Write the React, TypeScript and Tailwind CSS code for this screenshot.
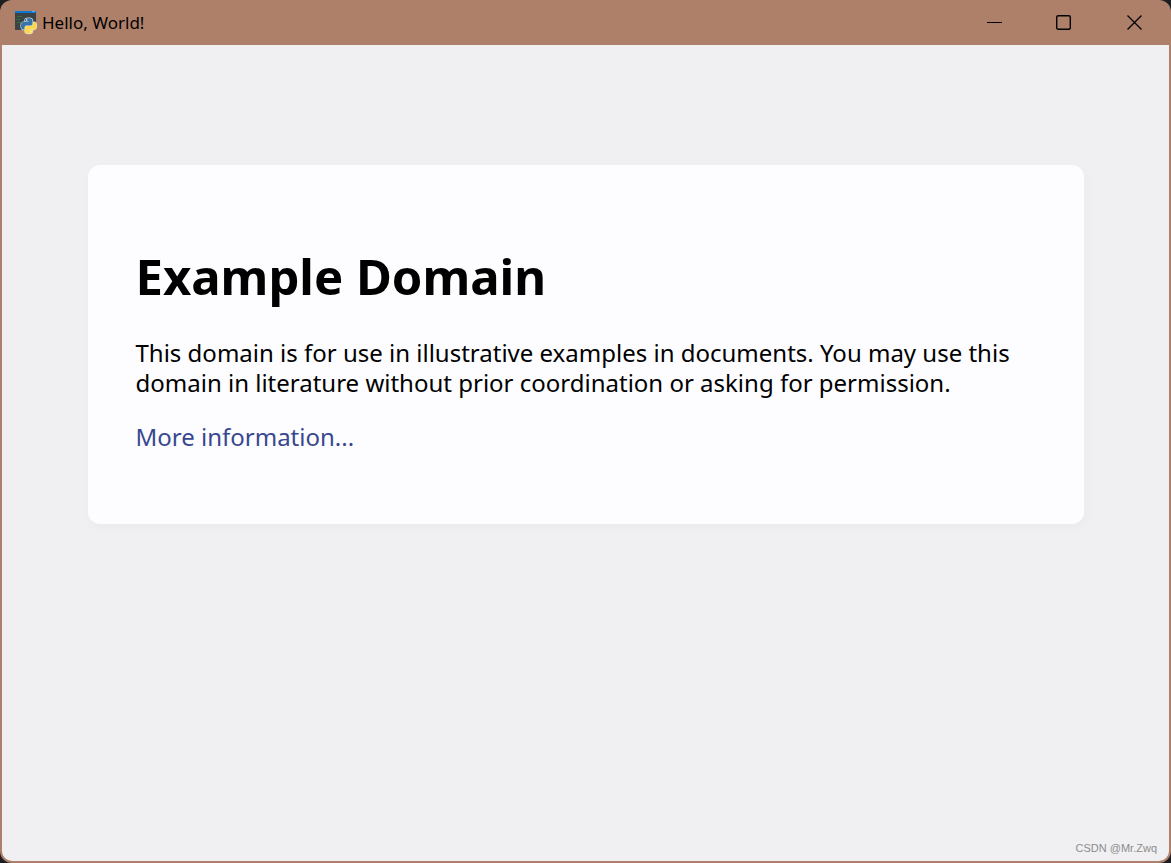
import { useState } from "react";

const PythonIcon = () => (
  <svg width="24" height="24" viewBox="0 0 24 24" aria-hidden="true">
    <rect x="2" y="1" width="21" height="18" fill="#3b4347" />
    <rect x="2" y="0" width="21" height="2" fill="#0a78d0" />
    <rect x="19" y="0" width="3" height="1" fill="#5fb0ee" />
    <path d="M4 5.500h5M3 8.500h4M4 11.500h4" stroke="#2f7436" strokeWidth="1" />
    <g transform="translate(8 7) scale(0.14)">
      <g stroke="#dfe3e0" strokeWidth="9">
        <path d="M54.900 1C27 1 28.700 13 28.700 13v12.600h26.700v3.800H18S0 27.300 0 55.500s15.700 27.300 15.700 27.300h9.400V69.600s-.5-15.700 15.500-15.700h26.500s15 .2 15-14.500V15.500S84.400 1 54.900 1z" />
        <path d="M55.700 111c27.900 0 26.200-12 26.200-12V86.300H55.300v-3.800h37.300s17.900 2 17.900-26.200-15.600-27.200-15.600-27.200h-9.400v13.100s.5 15.700-15.400 15.700H43.500s-15-.2-15 14.500v24.200S26.300 111 55.700 111z" />
      </g>
      <path
        d="M54.900 1C27 1 28.700 13 28.700 13v12.600h26.700v3.800H18S0 27.300 0 55.500s15.700 27.300 15.700 27.300h9.400V69.600s-.5-15.700 15.500-15.700h26.500s15 .2 15-14.500V15.500S84.400 1 54.900 1z"
        fill="#3775a9"
      />
      <path
        d="M55.700 111c27.900 0 26.200-12 26.200-12V86.300H55.300v-3.800h37.300s17.900 2 17.900-26.200-15.600-27.200-15.600-27.200h-9.400v13.100s.5 15.700-15.400 15.700H43.500s-15-.2-15 14.500v24.200S26.300 111 55.700 111z"
        fill="#ffd84a"
      />
      <circle cx="40" cy="14" r="5" fill="#fff" />
      <circle cx="70.500" cy="98" r="5" fill="#fff" />
    </g>
  </svg>
);

const TitleBar = ({ title }: { title: string }) => {
  const [maximized, setMaximized] = useState(false);

  return (
    <header className="flex h-[45px] shrink-0 items-center justify-between pr-[2px] pl-[13px]">
      <div className="flex items-center gap-[5px]">
        <PythonIcon />
        <span className="text-[17px] leading-6 text-black">{title}</span>
      </div>
      <div className="flex h-full">
        <button
          type="button"
          aria-label="Minimize"
          className="flex h-full w-[70px] items-center justify-center hover:bg-black/10"
        >
          <svg width="17" height="17" viewBox="0 0 17 17">
            <path d="M1 8.500h15" stroke="#000" />
          </svg>
        </button>
        <button
          type="button"
          aria-label="Maximize"
          aria-pressed={maximized}
          onClick={() => setMaximized(!maximized)}
          className="flex h-full w-[70px] items-center justify-center hover:bg-black/10"
        >
          <svg width="17" height="17" viewBox="0 0 17 17" fill="none">
            <rect x="0.700" y="1.700" width="13.600" height="13.600" rx="1.500" stroke="#000" strokeWidth="1.400" />
          </svg>
        </button>
        <button
          type="button"
          aria-label="Close"
          className="flex h-full w-[70px] items-center justify-center hover:bg-black/10"
        >
          <svg width="17" height="17" viewBox="0 0 17 17">
            <path d="M1.500 1.500l14 14M15.500 1.500l-14 14" stroke="#000" strokeWidth="1.300" />
          </svg>
        </button>
      </div>
    </header>
  );
};

export default function App() {
  return (
    <div className="min-h-screen bg-[#1c1e22] font-['Noto_Sans','Open_Sans',sans-serif]">
      <div className="flex min-h-screen flex-col rounded-xl bg-[#ae806a]">
        <TitleBar title="Hello, World!" />
        <div className="mx-[2px] mb-[2px] flex flex-1 flex-col rounded-b-[10px] bg-[#f0f0f2]">
          <main className="mx-auto mt-[120px] w-[996px] max-w-full rounded-xl bg-[#fdfdff] px-12 pt-20 pb-[72px] text-black shadow-[2px_4px_10px_2px_rgba(0,0,0,0.02)]">
            <h1 className="text-[49px] leading-[62px] font-bold">Example Domain</h1>
            <p className="mt-[31px] text-[24px] leading-[30px]">
              This domain is for use in illustrative examples in documents. You may use this
              domain in literature without prior coordination or asking for permission.
            </p>
            <p className="mt-6 text-[24px] leading-[30px]">
              <a href="https://www.iana.org/domains/example" className="text-[#38488f]">
                More information...
              </a>
            </p>
          </main>
          <footer className="mt-auto px-3 pb-[5px] text-right font-['Liberation_Sans',Arial,sans-serif] text-[11px] leading-4 text-[#8c8c8c]">
            CSDN @Mr.Zwq
          </footer>
        </div>
      </div>
    </div>
  );
}
